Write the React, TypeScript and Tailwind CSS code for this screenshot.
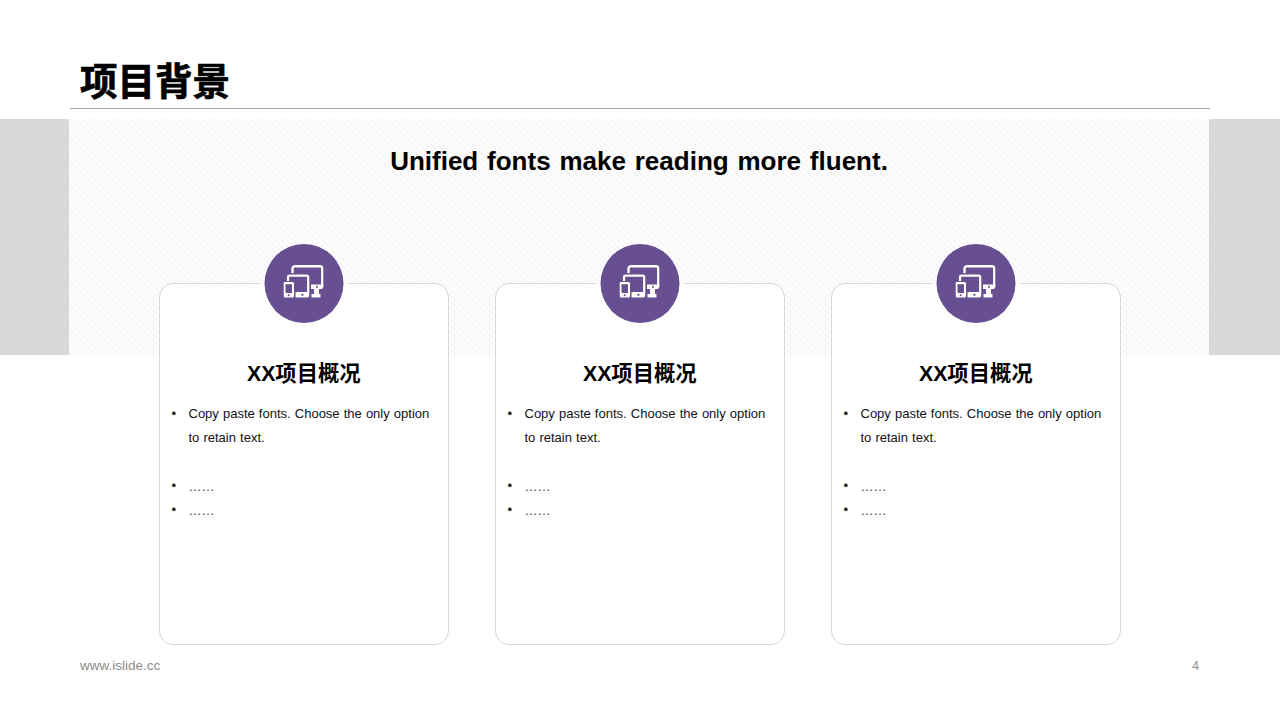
const sans = "font-['Liberation_Sans','Noto_Sans_CJK_SC',sans-serif]";
const sidePattern =
  "bg-[linear-gradient(45deg,#d4d4d4_25%,#dddddd_25%,#dddddd_50%,#d4d4d4_50%,#d4d4d4_75%,#dddddd_75%)] bg-[length:4px_4px]";

function DevicesIcon() {
  return (
    <svg width="40" height="33" viewBox="0 0 40 33" fill="none" aria-hidden="true" className="-mt-[3px]">
      {/* monitor */}
      <path d="M9 8V3.5C9 2.1 10.1 1.2 11.5 1.2H36.5C37.9 1.2 38.8 2.1 38.8 3.5V21" stroke="white" strokeWidth="2.4" />
      <path d="M27.5 19.5H40V21.5C40 22.9 39 24 37.5 24H35.5V29H37V32.5H28V29H30.5V24H27.5Z" fill="white" />
      <circle cx="33.5" cy="21.8" r="1.1" fill="#674f92" />
      {/* tablet */}
      <path d="M4.5 16V12.3C4.5 11.3 5.3 10.6 6.3 10.6H23C24 10.6 24.7 11.3 24.7 12.3V27" stroke="white" strokeWidth="2.2" />
      <path d="M12 27H25.8V30.5C25.8 31.6 24.9 32.5 23.8 32.5H12Z" fill="white" />
      <circle cx="19" cy="29.8" r="1.1" fill="#674f92" />
      {/* phone */}
      <path d="M1.5 17H9C9.8 17 10.5 17.7 10.5 18.5V31C10.5 31.8 9.8 32.5 9 32.5H1.5C0.7 32.5 0 31.8 0 31V18.5C0 17.7 0.7 17 1.5 17Z" fill="white" />
      <rect x="2" y="19.2" width="6.5" height="8.8" fill="#674f92" />
      <circle cx="5.2" cy="30.2" r="1" fill="#674f92" />
    </svg>
  );
}

function Card() {
  return (
    <div className="relative w-[290.5px] h-[362px] rounded-[14px] border border-[#d9d9d9] bg-white pl-[12px] pr-[12px] pt-[75px]">
      <div className="absolute left-1/2 -translate-x-1/2 -top-px w-[87px] h-[2px] bg-white" />
      <div className="absolute left-1/2 -translate-x-1/2 -top-[40px] w-[79px] h-[78.5px] rounded-full bg-[#674f92] flex items-center justify-center">
        <DevicesIcon />
      </div>
      <h2 className="text-center text-[21.3px] leading-[30px] font-bold text-black">XX项目概况</h2>
      <ul className="mt-[13px] text-[13px] leading-[24px] text-[#111111]">
        <li className="flex">
          <span className="w-[17px] shrink-0">•</span>
          <span className="[word-spacing:0.5px]">Copy paste fonts. Choose the only option to retain text.</span>
        </li>
        <li className="flex mt-[24px]">
          <span className="w-[17px] shrink-0">•</span>
          <span className="text-[#444444] pt-px">……</span>
        </li>
        <li className="flex -mt-px">
          <span className="w-[17px] shrink-0">•</span>
          <span className="text-[#444444] pt-px">……</span>
        </li>
      </ul>
    </div>
  );
}

export default function App() {
  return (
    <div className={`${sans} w-[1280px] h-[720px] bg-white overflow-hidden`}>
      <header className="ml-[70px] mr-[70px] h-[109px] border-b border-[#a6a6a6] pl-[10px] pt-[58px]">
        <h1 className="text-[37.5px] leading-[48px] font-bold text-black [-webkit-text-stroke:0.7px_black]">项目背景</h1>
      </header>
      <section className="mt-[10px] h-[236px] grid grid-cols-[69px_1fr_71px]">
        <div className={`bg-[#d9d9d9] ${sidePattern}`} />
        <div className="bg-[linear-gradient(45deg,#f7f7f7_25%,#fefefe_25%,#fefefe_50%,#f7f7f7_50%,#f7f7f7_75%,#fefefe_75%)] bg-[length:6px_6px] pt-[25px] text-center">
          <p className="text-[26px] leading-[34px] font-bold text-black [word-spacing:1.6px]">Unified fonts make reading more fluent.</p>
        </div>
        <div className={`bg-[#d9d9d9] ${sidePattern}`} />
      </section>
      <main className="-mt-[72px] ml-[158.5px] flex gap-[45.5px]">
        <Card />
        <Card />
        <Card />
      </main>
      <footer className="mt-[13px] ml-[80px] mr-[81px] flex justify-between text-[13.5px] leading-[16px] text-[#8c8c8c]">
        <span>www.islide.cc</span>
        <span className="text-[12px]">4</span>
      </footer>
    </div>
  );
}
